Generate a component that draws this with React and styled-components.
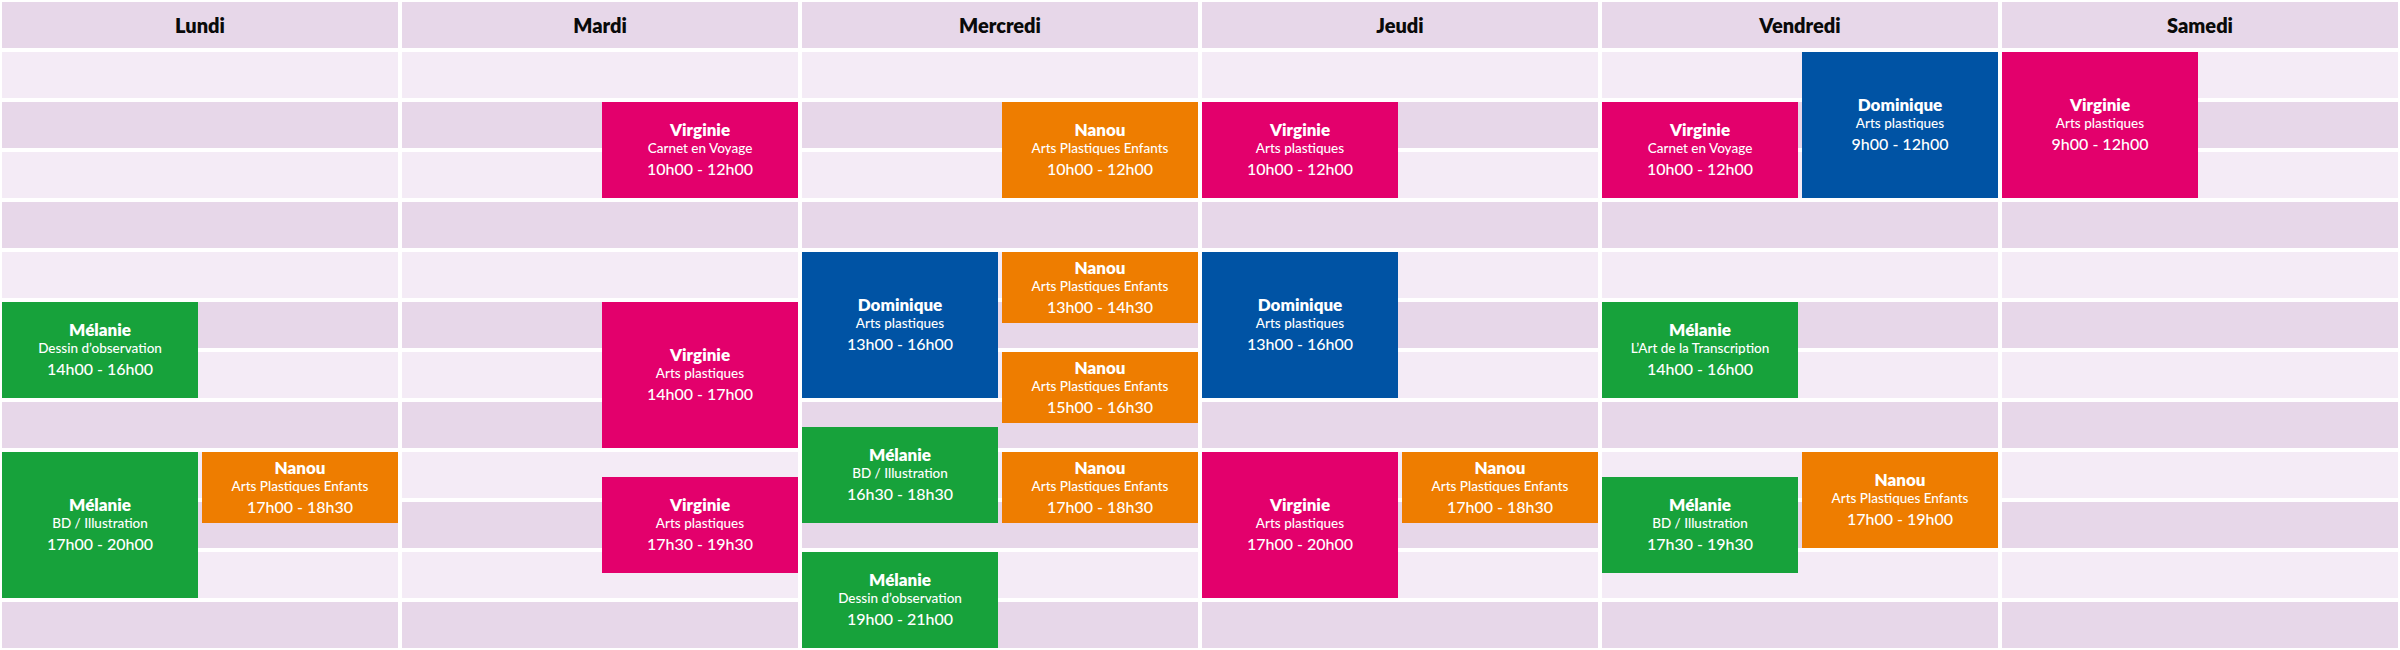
import React from 'react';
import styled, { createGlobalStyle } from 'styled-components';

const COLORS = {
  green: '#17a23b',
  orange: '#ee7d00',
  magenta: '#e3006c',
  blue: '#0053a4',
};

const FIRST_HOUR = 9;
const LAST_HOUR = 21;

const days = [
  {
    name: 'Lundi',
    events: [
      { col: 1, start: 14, end: 16, who: 'Mélanie', what: 'Dessin d’observation', time: '14h00 - 16h00', color: 'green' },
      { col: 1, start: 17, end: 20, who: 'Mélanie', what: 'BD / Illustration', time: '17h00 - 20h00', color: 'green' },
      { col: 2, start: 17, end: 18.5, who: 'Nanou', what: 'Arts Plastiques Enfants', time: '17h00 - 18h30', color: 'orange' },
    ],
  },
  {
    name: 'Mardi',
    events: [
      { col: 2, start: 10, end: 12, who: 'Virginie', what: 'Carnet en Voyage', time: '10h00 - 12h00', color: 'magenta' },
      { col: 2, start: 14, end: 17, who: 'Virginie', what: 'Arts plastiques', time: '14h00 - 17h00', color: 'magenta' },
      { col: 2, start: 17.5, end: 19.5, who: 'Virginie', what: 'Arts plastiques', time: '17h30 - 19h30', color: 'magenta' },
    ],
  },
  {
    name: 'Mercredi',
    events: [
      { col: 2, start: 10, end: 12, who: 'Nanou', what: 'Arts Plastiques Enfants', time: '10h00 - 12h00', color: 'orange' },
      { col: 1, start: 13, end: 16, who: 'Dominique', what: 'Arts plastiques', time: '13h00 - 16h00', color: 'blue' },
      { col: 2, start: 13, end: 14.5, who: 'Nanou', what: 'Arts Plastiques Enfants', time: '13h00 - 14h30', color: 'orange' },
      { col: 2, start: 15, end: 16.5, who: 'Nanou', what: 'Arts Plastiques Enfants', time: '15h00 - 16h30', color: 'orange' },
      { col: 1, start: 16.5, end: 18.5, who: 'Mélanie', what: 'BD / Illustration', time: '16h30 - 18h30', color: 'green' },
      { col: 2, start: 17, end: 18.5, who: 'Nanou', what: 'Arts Plastiques Enfants', time: '17h00 - 18h30', color: 'orange' },
      { col: 1, start: 19, end: 21, who: 'Mélanie', what: 'Dessin d’observation', time: '19h00 - 21h00', color: 'green' },
    ],
  },
  {
    name: 'Jeudi',
    events: [
      { col: 1, start: 10, end: 12, who: 'Virginie', what: 'Arts plastiques', time: '10h00 - 12h00', color: 'magenta' },
      { col: 1, start: 13, end: 16, who: 'Dominique', what: 'Arts plastiques', time: '13h00 - 16h00', color: 'blue' },
      { col: 1, start: 17, end: 20, who: 'Virginie', what: 'Arts plastiques', time: '17h00 - 20h00', color: 'magenta' },
      { col: 2, start: 17, end: 18.5, who: 'Nanou', what: 'Arts Plastiques Enfants', time: '17h00 - 18h30', color: 'orange' },
    ],
  },
  {
    name: 'Vendredi',
    events: [
      { col: 1, start: 10, end: 12, who: 'Virginie', what: 'Carnet en Voyage', time: '10h00 - 12h00', color: 'magenta' },
      { col: 2, start: 9, end: 12, who: 'Dominique', what: 'Arts plastiques', time: '9h00 - 12h00', color: 'blue' },
      { col: 1, start: 14, end: 16, who: 'Mélanie', what: 'L’Art de la Transcription', time: '14h00 - 16h00', color: 'green' },
      { col: 1, start: 17.5, end: 19.5, who: 'Mélanie', what: 'BD / Illustration', time: '17h30 - 19h30', color: 'green' },
      { col: 2, start: 17, end: 19, who: 'Nanou', what: 'Arts Plastiques Enfants', time: '17h00 - 19h00', color: 'orange' },
    ],
  },
  {
    name: 'Samedi',
    events: [
      { col: 1, start: 9, end: 12, who: 'Virginie', what: 'Arts plastiques', time: '9h00 - 12h00', color: 'magenta' },
    ],
  },
];

// two grid rows per hour, header takes rows 1-2
const rowOf = (hour) => 3 + (hour - FIRST_HOUR) * 2;

const hours = [];
for (let h = FIRST_HOUR; h < LAST_HOUR; h++) hours.push(h);

const App = () => {
  return (
    <>
      <GlobalStyle />
      <Planning>
        {days.map((day) => (
          <DayColumn key={day.name}>
            <DayHeader>{day.name}</DayHeader>
            {hours.map((h) => (
              <HourStripe key={h} $row={rowOf(h)} $dark={(h - FIRST_HOUR) % 2 === 1} />
            ))}
            {day.events.map((ev, i) => (
              <Lesson
                key={i}
                $col={ev.col}
                $from={rowOf(ev.start)}
                $to={rowOf(ev.end)}
                $color={COLORS[ev.color]}
              >
                <Teacher>{ev.who}</Teacher>
                <Course>{ev.what}</Course>
                <Hours>{ev.time}</Hours>
              </Lesson>
            ))}
          </DayColumn>
        ))}
      </Planning>
    </>
  );
};

const GlobalStyle = createGlobalStyle`
  body {
    margin: 0;
    background: #ffffff;
    font-family: Lato, "Open Sans", sans-serif;
  }
`;

const Planning = styled.div`
  display: flex;
  gap: 4px;
  padding: 0 2px;
  width: 2400px;
  height: 650px;
  box-sizing: border-box;
  background: #ffffff;
`;

const DayColumn = styled.div`
  display: grid;
  grid-template-columns: 196px 196px;
  grid-template-rows: repeat(26, 25px);
  column-gap: 4px;
  width: 396px;
`;

const DayHeader = styled.div`
  grid-column: 1 / -1;
  grid-row: 1 / span 2;
  margin: 2px 0;
  background: #e7d7e9;
  display: flex;
  align-items: center;
  justify-content: center;
  font-size: 20px;
  font-weight: 800;
  color: #0a0a0a;
`;

const HourStripe = styled.div`
  grid-column: 1 / -1;
  grid-row: ${(p) => p.$row} / span 2;
  margin: 2px 0;
  background: ${(p) => (p.$dark ? '#e7d7e9' : '#f4ebf6')};
`;

const Lesson = styled.div`
  grid-column: ${(p) => p.$col};
  grid-row: ${(p) => p.$from} / ${(p) => p.$to};
  margin: 2px 0;
  background: ${(p) => p.$color};
  color: #ffffff;
  display: flex;
  flex-direction: column;
  align-items: center;
  justify-content: center;
  text-align: center;
  z-index: 1;
`;

const Teacher = styled.div`
  font-size: 17px;
  font-weight: 800;
  line-height: 18px;
`;

const Course = styled.div`
  font-size: 13.5px;
  font-weight: 500;
  line-height: 18px;
`;

const Hours = styled.div`
  font-size: 16px;
  font-weight: 500;
  line-height: 21px;
  margin-top: 1px;
`;

export default App;
